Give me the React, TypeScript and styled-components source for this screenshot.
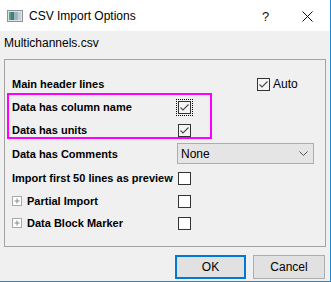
import React from "react";
import styled, { createGlobalStyle } from "styled-components";

const GlobalStyle = createGlobalStyle`
  html, body {
    margin: 0;
    padding: 0;
    background: #ffffff;
  }
  body {
    font-family: "Liberation Sans", Arial, sans-serif;
    font-size: 12px;
    color: #000;
  }
`;

type RowSpec = {
  label: string;
  height: number;
  expander?: boolean;
  control: React.ReactNode;
};

const CheckMark = () => (
  <svg width="11" height="11" viewBox="0 0 11 11">
    <polyline points="1.5,5.5 4,8 9.5,2.5" fill="none" stroke="#4a4a4a" strokeWidth="1.1" />
  </svg>
);

const Checkbox = ({ checked, focused }: { checked?: boolean; focused?: boolean }) => (
  <FocusRing $focused={!!focused}>
    <Box $checked={!!checked}>{checked && <CheckMark />}</Box>
  </FocusRing>
);

const Expander = () => (
  <svg width="10" height="10" viewBox="0 0 10 10">
    <rect x="0.5" y="0.5" width="9" height="9" fill="#fff" stroke="#a9a9a9" />
    <line x1="2.5" y1="5" x2="7.5" y2="5" stroke="#8a8a8a" />
    <line x1="5" y1="2.5" x2="5" y2="7.5" stroke="#8a8a8a" />
  </svg>
);

const AppIcon = () => (
  <svg width="16" height="12" viewBox="0 0 16 12">
    <rect x="0.5" y="0.5" width="15" height="11" fill="#dfe3e6" stroke="#8d9297" />
    <rect x="2" y="2" width="5" height="8" fill="#3c7f86" />
    <rect x="7" y="2" width="4" height="8" fill="#9fb6bb" />
    <rect x="11" y="2" width="3" height="8" fill="#c7d1d4" />
    <rect x="2" y="2" width="2" height="8" fill="#5aa27a" />
  </svg>
);

export default function App() {
  const rows: RowSpec[] = [
    {
      label: "Data has Comments",
      height: 25,
      control: (
        <Combo>
          <span>None</span>
          <svg width="9" height="5" viewBox="0 0 9 5">
            <polyline points="0.5,0.5 4.5,4.5 8.5,0.5" fill="none" stroke="#555" />
          </svg>
        </Combo>
      ),
    },
    { label: "Import first 50 lines as preview", height: 24, control: <Checkbox /> },
    { label: "Partial Import", height: 22, expander: true, control: <Checkbox /> },
    { label: "Data Block Marker", height: 22, expander: true, control: <Checkbox /> },
  ];

  return (
    <>
      <GlobalStyle />
      <Window>
        <TitleBar>
          <AppIcon />
          <Title>CSV Import Options</Title>
          <Help>?</Help>
          <Close>
            <svg width="11" height="11" viewBox="0 0 11 11">
              <line x1="0.5" y1="0.5" x2="10.5" y2="10.5" stroke="#111" />
              <line x1="10.5" y1="0.5" x2="0.5" y2="10.5" stroke="#111" />
            </svg>
          </Close>
        </TitleBar>
        <Body>
          <FileName>Multichannels.csv</FileName>
          <GroupBox>
            <Row $h={22}>
              <Label>Main header lines</Label>
              <Control $offset={79}>
                <Checkbox checked />
                <ControlText>Auto</ControlText>
              </Control>
            </Row>
            <Highlight>
              <Row $h={24}>
                <Label>Data has column name</Label>
                <Control>
                  <Checkbox checked focused />
                </Control>
              </Row>
              <Row $h={22}>
                <Label>Data has units</Label>
                <Control>
                  <Checkbox checked />
                </Control>
              </Row>
            </Highlight>
            {rows.map((r) => (
              <Row key={r.label} $h={r.height}>
                <Label>
                  {r.expander && (
                    <ExpanderSlot>
                      <Expander />
                    </ExpanderSlot>
                  )}
                  {r.label}
                </Label>
                <Control>{r.control}</Control>
              </Row>
            ))}
          </GroupBox>
          <Buttons>
            <Button $primary>OK</Button>
            <Button>Cancel</Button>
          </Buttons>
        </Body>
      </Window>
    </>
  );
}

const Window = styled.div`
  width: 331px;
  height: 282px;
  box-sizing: border-box;
  border-right: 1px solid #1c86d8;
  border-bottom: 1px solid #1c86d8;
  display: flex;
  flex-direction: column;
  overflow: hidden;
`;

const TitleBar = styled.div`
  height: 31px;
  flex: none;
  background: #fff;
  display: flex;
  align-items: center;
  padding-left: 7px;
  padding-top: 1px;
  box-sizing: border-box;
`;

const Title = styled.span`
  margin-left: 6px;
  font-size: 12px;
  flex: 1;
`;

const Help = styled.span`
  width: 40px;
  font-size: 13px;
  color: #111;
`;

const Close = styled.span`
  width: 28px;
  display: flex;
  align-items: center;
`;

const Body = styled.div`
  flex: 1;
  background: #f0f0f0;
  display: flex;
  flex-direction: column;
  padding: 0 4px;
`;

const FileName = styled.div`
  height: 24px;
  line-height: 24px;
  margin-bottom: 4px;
`;

const GroupBox = styled.div`
  border: 1px solid #a4a4a4;
  padding: 13px 0 12px 7px;
  display: flex;
  flex-direction: column;
`;

const Highlight = styled.div`
  position: relative;
  &::after {
    content: "";
    position: absolute;
    left: -5px;
    top: -2px;
    width: 205px;
    height: 46px;
    border: 2px solid #ff00ff;
    box-sizing: border-box;
    pointer-events: none;
  }
`;

const Row = styled.div<{ $h: number }>`
  height: ${(p) => p.$h}px;
  display: grid;
  grid-template-columns: 166px 1fr;
  align-items: center;
`;

const Label = styled.div`
  font-size: 11px;
  font-weight: bold;
  display: flex;
  align-items: center;
  white-space: nowrap;
`;

const ExpanderSlot = styled.span`
  display: inline-flex;
  margin-right: 5px;
`;

const Control = styled.div<{ $offset?: number }>`
  display: flex;
  align-items: center;
  padding-left: ${(p) => p.$offset ?? 0}px;
`;

const ControlText = styled.span`
  margin-left: 3px;
`;

const FocusRing = styled.span<{ $focused: boolean }>`
  display: inline-flex;
  padding: 1px;
  margin: -2px;
  border: 1px dotted ${(p) => (p.$focused ? "#000" : "transparent")};
`;

const Box = styled.span<{ $checked: boolean }>`
  width: 13px;
  height: 13px;
  box-sizing: border-box;
  border: 1px solid #333;
  background: ${(p) => (p.$checked ? "#f4f4f4" : "#fff")};
  display: inline-flex;
  align-items: center;
  justify-content: center;
`;

const Combo = styled.div`
  margin-left: -1px;
  width: 137px;
  height: 21px;
  box-sizing: border-box;
  border: 1px solid #adadad;
  background: #e5e5e5;
  display: flex;
  align-items: center;
  justify-content: space-between;
  padding: 0 5px 0 3px;
`;

const Buttons = styled.div`
  display: flex;
  justify-content: flex-end;
  gap: 7px;
  margin-top: 8px;
  padding-right: 1px;
`;

const Button = styled.button<{ $primary?: boolean }>`
  width: ${(p) => (p.$primary ? 71 : 72)}px;
  height: 24px;
  box-sizing: border-box;
  font-family: "Liberation Sans", Arial, sans-serif;
  font-size: 12px;
  color: #000;
  background: #e1e1e1;
  border: ${(p) => (p.$primary ? "2px solid #0078d7" : "1px solid #adadad")};
  padding: 0;
`;
